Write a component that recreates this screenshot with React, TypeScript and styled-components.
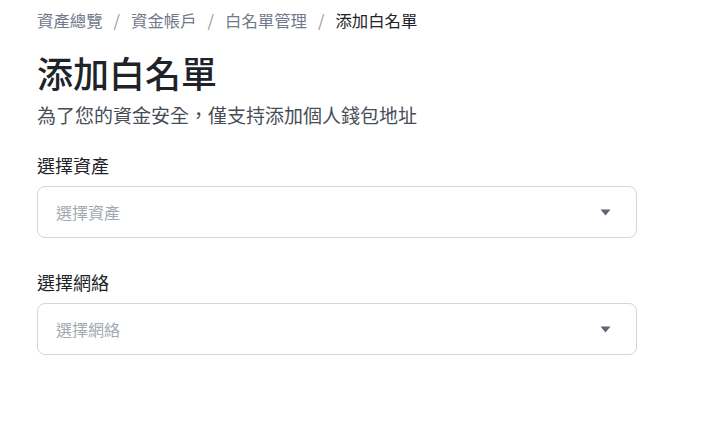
import styled, { createGlobalStyle } from "styled-components";

const GlobalStyle = createGlobalStyle`
  html, body {
    margin: 0;
    padding: 0;
    background: #ffffff;
    font-family: "Noto Sans CJK TC", "Noto Sans", sans-serif;
    color: #1e2329;
  }
`;

const Page = styled.div`
  padding: 6px 37px 0;
  width: 600px;
`;

const Crumbs = styled.nav`
  display: flex;
  align-items: center;
  gap: 9px;
  font-size: 16.4px;
  line-height: 28px;
  color: #707a8a;
`;

const Crumb = styled.span<{ $current?: boolean }>`
  color: ${(p) => (p.$current ? "#1e2329" : "#707a8a")};
`;

const Sep = styled.span`
  color: #929aa5;
  padding: 0 2px;
`;

const Title = styled.h1`
  margin: 14px 0 0;
  font-size: 36px;
  line-height: 48px;
  font-weight: 500;
  color: #1e2329;
`;

const Subtitle = styled.p`
  margin: 5px 0 0;
  font-size: 19px;
  line-height: 28px;
  color: #474d57;
`;

const Field = styled.div`
  display: flex;
  flex-direction: column;
  gap: 9px;
  margin-top: 24px;

  & + & {
    margin-top: 32px;
  }
`;

const Label = styled.label`
  font-size: 18px;
  line-height: 24px;
  font-weight: 400;
  color: #1e2329;
`;

const SelectBox = styled.div`
  display: flex;
  align-items: center;
  justify-content: space-between;
  height: 52px;
  box-sizing: border-box;
  padding: 0 25px 0 18px;
  border: 1px solid #d2d5d9;
  border-radius: 8px;
  background: #fff;
`;

const Placeholder = styled.span`
  font-size: 16px;
  color: #a4a9b1;
`;

const Caret = () => (
  <svg width="11" height="7" viewBox="0 0 11 7">
    <path d="M0.5 0.5h10L5.5 6.5z" fill="#5e6673" />
  </svg>
);

function Select({ label }: { label: string }) {
  return (
    <Field>
      <Label>{label}</Label>
      <SelectBox>
        <Placeholder>{label}</Placeholder>
        <Caret />
      </SelectBox>
    </Field>
  );
}

export default function App() {
  return (
    <>
      <GlobalStyle />
      <Page>
        <Crumbs>
          <Crumb>資產總覽</Crumb>
          <Sep>/</Sep>
          <Crumb>資金帳戶</Crumb>
          <Sep>/</Sep>
          <Crumb>白名單管理</Crumb>
          <Sep>/</Sep>
          <Crumb $current>添加白名單</Crumb>
        </Crumbs>
        <Title>添加白名單</Title>
        <Subtitle>為了您的資金安全，僅支持添加個人錢包地址</Subtitle>
        <Select label="選擇資產" />
        <Select label="選擇網絡" />
      </Page>
    </>
  );
}
